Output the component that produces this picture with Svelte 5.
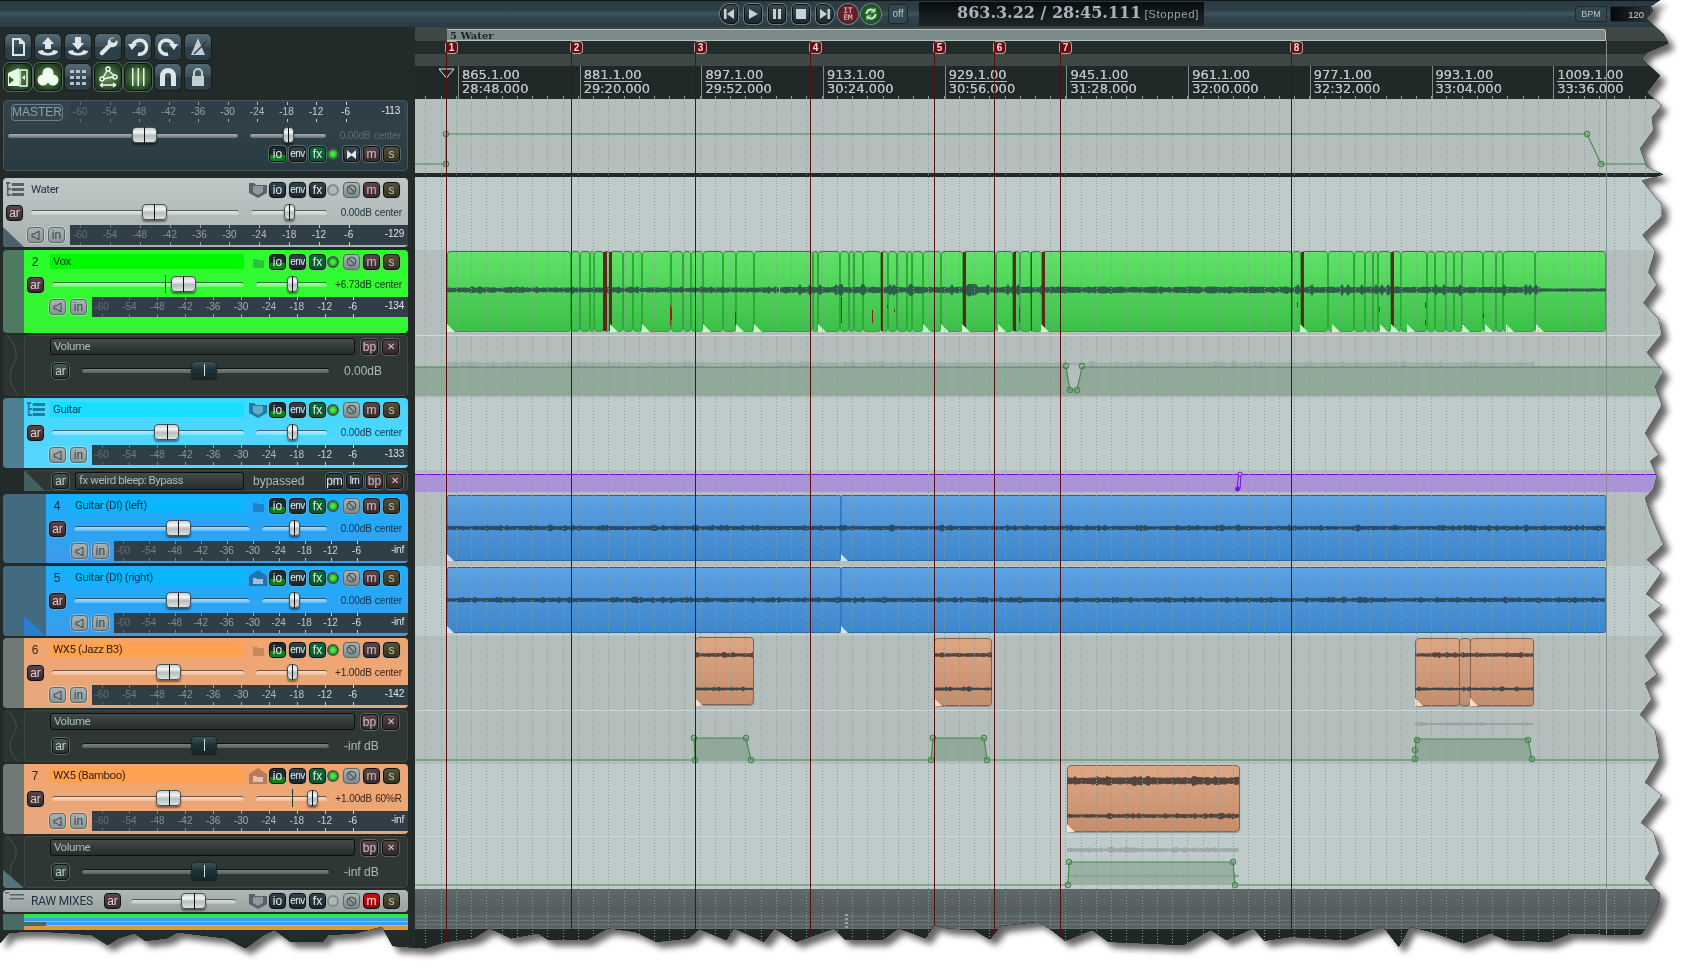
<script>
  const ticks = [-60, -54, -48, -42, -36, -30, -24, -18, -12, -6];

  // ruler: 16 bars per label, 32 seconds each
  const bars = [
    ["865.1.00", "28:48.000"], ["881.1.00", "29:20.000"], ["897.1.00", "29:52.000"],
    ["913.1.00", "30:24.000"], ["929.1.00", "30:56.000"], ["945.1.00", "31:28.000"],
    ["961.1.00", "32:00.000"], ["977.1.00", "32:32.000"], ["993.1.00", "33:04.000"],
    ["1009.1.00", "33:36.000"],
  ];
  const markers = [446, 571, 695, 810, 934, 994, 1060, 1291];

  const gridX = [];
  for (let k = -60; k < 25; k++) gridX.push(Math.round(1309.3 + k * 15.24));

  const lanes = [
    { h: 74, c: "dark" }, { h: 4, c: "bar" }, { h: 73, c: "light" },
    { h: 85, c: "dark" }, { h: 63, c: "dark top" }, { h: 72, c: "light" },
    { h: 24, c: "dark" }, { h: 72, c: "dark" }, { h: 70, c: "light" },
    { h: 74, c: "dark" }, { h: 54, c: "dark top" }, { h: 72, c: "light" },
    { h: 53, c: "light top" }, { h: 24, c: "raw" }, { h: 16, c: "thin" },
  ];

  // waveforms are noise, seeded so that they don't change between runs
  function wave(x0, x1, y, base, peak, seed) {
    let s = seed;
    const rnd = () => {
      s = (s * 16807) % 2147483647;
      return s / 2147483647;
    };
    const up = [];
    const down = [];
    for (let x = x0; x <= x1; x += 2) {
      const bump = rnd() > 0.86 ? peak : base * (0.8 + 0.35 * rnd());
      up.push(x + "," + (y - bump).toFixed(1));
      down.unshift(x + "," + (y + bump * (0.8 + 0.3 * rnd())).toFixed(1));
    }
    return up.concat(down).join(" ");
  }

  const voxCuts = [447, 571, 580, 590, 594, 604, 610, 623, 633, 642, 671, 683, 691, 703, 723, 736, 754,
    813, 818, 840, 849, 854, 863, 881, 888, 897, 907, 912, 923, 941, 963, 996, 1013, 1020, 1031, 1042,
    1292, 1301, 1328, 1354, 1365, 1373, 1378, 1391, 1401, 1427, 1435, 1446, 1454, 1462, 1483, 1496, 1503, 1535, 1606];
  const voxDark = [[603, 4], [609, 3], [881, 2], [963, 3], [1013, 3], [1031, 1], [1042, 3], [1301, 3], [1391, 3]];
  const voxFlecks = [[670, 305, 20], [671, 308, 12], [735, 312, 13], [841, 297, 26], [872, 310, 13], [887, 305, 3], [894, 309, 3], [1019, 308, 14], [1297, 302, 5], [1379, 307, 5], [1425, 302, 6], [1425, 320, 5], [1483, 313, 5]];
  const voxCorners = [447, 610, 642, 703, 736, 754, 818, 923, 941, 962, 998, 1041, 1300, 1332, 1380, 1391, 1407, 1462, 1485, 1506, 1536];

  const items = [];
  for (let i = 0; i < voxCuts.length - 1; i++) {
    items.push({ c: "vox", x: voxCuts[i], y: 251, w: voxCuts[i + 1] - voxCuts[i], h: 81 });
  }
  items.push({ c: "blue", x: 447, y: 495, w: 394, h: 66 }, { c: "blue", x: 841, y: 495, w: 765, h: 66 });
  items.push({ c: "blue", x: 447, y: 567, w: 394, h: 66 }, { c: "blue", x: 841, y: 567, w: 765, h: 66 });
  for (const [x, w] of [[695, 59], [934, 58], [1415, 45], [1459, 12], [1470, 64]]) {
    items.push({ c: "wood", x, y: 638, w, h: 68 });
  }
  items.push({ c: "wood", x: 1067, y: 765, w: 173, h: 67 });

  const corners = [
    ...voxCorners.map((x) => ({ x, y: 332, s: 8, f: "#c8ffc8" })),
    ...[447, 841].flatMap((x) => [{ x, y: 561, s: 7, f: "#cfe6fa" }, { x, y: 633, s: 7, f: "#cfe6fa" }]),
    ...[695, 934, 1415, 1470].map((x) => ({ x, y: 706, s: 8, f: "#fddcc4" })),
    { x: 1067, y: 832, s: 8, f: "#fddcc4" },
  ];

  const waves = [
    { p: wave(447, 780, 290, 2.4, 3.6, 11) + "", f: "#2f5d4b" },
    { p: wave(780, 1045, 290, 3, 6, 23), f: "#2f5d4b" },
    { p: wave(1045, 1292, 290, 3, 3.6, 31), f: "#2f5d4b" },
    { p: wave(1292, 1540, 290, 3, 6, 47), f: "#2f5d4b" },
    { p: wave(1540, 1606, 290, 1.6, 1.6, 5), f: "#2f5d4b" },
    { p: wave(447, 1606, 528, 2, 3.2, 53), f: "#2b4c68" },
    { p: wave(447, 1606, 600, 2, 3.2, 59), f: "#2b4c68" },
    { p: wave(695, 754, 655, 1.8, 3, 61), f: "#54463e" },
    { p: wave(695, 754, 689, 1.4, 2.4, 67), f: "#40474a" },
    { p: wave(934, 992, 655, 1.8, 3, 71), f: "#54463e" },
    { p: wave(934, 992, 689, 1.4, 2.4, 73), f: "#40474a" },
    { p: wave(1415, 1534, 655, 1.8, 3, 79), f: "#54463e" },
    { p: wave(1415, 1534, 689, 1.3, 2.4, 83), f: "#40474a" },
    { p: wave(1067, 1240, 781, 3.6, 5, 89), f: "#54463e" },
    { p: wave(1067, 1240, 816, 1.8, 3, 97), f: "#54463e" },
    { p: wave(447, 1535, 364, 1.5, 3, 101), f: "#9eabaa" },
    { p: wave(1067, 1240, 850, 1.8, 3, 103), f: "#9ea9a8" },
    { p: wave(1067, 1240, 876, 1, 2, 107), f: "#8ea595" },
    { p: wave(1415, 1534, 724, 1.2, 2, 109), f: "#98a5a4" },
  ];

  const envBands = [
    "415,367 1066,367 1070,390 1077,390 1082,367 1660,367 1660,396 415,396",
    "694,738 746,738 751,761 695,761",
    "933,738 984,738 987,761 931,761",
    "1416,739 1528,739 1532,761 1415,761",
    "1069,862 1233,862 1235,885 1068,885",
  ];
  const envLines = [
    "415,164 446,164 446,134 1587,134 1601,164 1660,164",
    "415,367 1066,367 1070,390 1077,390 1082,367 1660,367",
    "415,760 695,760 694,738 746,738 751,760 931,760 933,738 984,738 987,760 1415,760 1416,739 1528,739 1532,760 1660,760",
    "415,885 1068,885 1069,862 1233,862 1235,885 1660,885",
  ];
  const envPoints = [
    [446, 134], [446, 164], [1587, 134], [1601, 164], [1066, 366], [1082, 366], [1070, 390], [1077, 390],
    [694, 738], [746, 738], [751, 760], [695, 760], [933, 738], [984, 738], [987, 760], [931, 760],
    [1417, 740], [1528, 740], [1532, 759], [1415, 759], [1415, 750], [1069, 862], [1233, 862], [1235, 885], [1068, 885],
  ];

  // the torn paper edge, read off the picture
  const tearRight = [[150, 0], [122, 10], [130, 18], [108, 30], [160, 55], [175, 70], [110, 85], [95, 95], [115, 105], [150, 122], [110, 150], [155, 170], [125, 190], [130, 210], [90, 240], [110, 270], [160, 282], [95, 292], [130, 315], [155, 330], [155, 350], [97, 380], [135, 405], [115, 440], [140, 460], [100, 490], [145, 515], [155, 540], [110, 570], [160, 600], [135, 625], [155, 655], [105, 700], [145, 735], [120, 745], [140, 770], [130, 790], [105, 805], [120, 830], [160, 880], [110, 905], [155, 925], [108, 960], [155, 978], [115, 995], [160, 1025], [105, 1060], [140, 1090], [105, 1105], [125, 1130], [90, 1155], [135, 1180], [148, 1225], [105, 1265], [155, 1285], [92, 1330], [130, 1345], [148, 1380], [105, 1420], [150, 1445], [140, 1470], [105, 1500], [95, 1510]];
  const tearBottom = [[0, 130], [8, 100], [20, 95], [40, 95], [60, 98], [85, 105], [100, 135], [110, 115], [125, 100], [135, 122], [155, 115], [165, 97], [185, 105], [210, 115], [228, 145], [245, 105], [255, 90], [270, 125], [300, 125], [305, 105], [330, 100], [355, 80], [365, 138], [395, 145], [415, 125], [440, 115], [455, 85], [475, 115], [500, 100], [510, 120], [545, 120], [565, 85], [590, 95], [610, 125], [640, 115], [650, 87], [675, 120], [682, 85], [710, 125], [720, 85], [740, 125], [775, 85], [785, 118], [820, 120], [835, 85], [860, 115], [868, 75], [880, 85], [905, 90], [920, 118], [930, 78], [965, 65], [975, 85], [990, 122], [1015, 90], [1030, 125], [1100, 135], [1125, 90], [1140, 120], [1165, 85], [1175, 122], [1200, 110], [1250, 120], [1285, 78], [1300, 140], [1310, 80], [1330, 95], [1360, 130], [1385, 100], [1400, 120], [1440, 125], [1460, 100], [1515, 105]];
  const tearPoints = [
    "0 0",
    ...tearRight.map(([a, b]) => (1610 + a / 3).toFixed(1) + "px " + (b * 0.6186).toFixed(1) + "px"),
    ...tearBottom.slice().reverse().map(([a, b]) => (a * 1.076).toFixed(1) + "px " + (900 + b / 3).toFixed(1) + "px"),
  ];
  const tear = "polygon(" + tearPoints.join(",") + ")";
</script>

{#snippet meter(value)}
  <div class="meter">
    <div class="scale">
      {#each ticks as t, i}
        <span style="opacity:{0.28 + i * 0.075}">{t}</span>
      {/each}
    </div>
    <b>{value}</b>
  </div>
{/snippet}

{#snippet fader(pos, mark)}
  <div class="fader">
    {#if mark}<i class="mark" style="left:{mark}%"></i>{/if}
    <i class="cap" style="left:{pos}%"></i>
  </div>
{/snippet}

{#snippet pan(pos = 50, mark)}
  <div class="pan">
    {#if mark}<i class="mark" style="left:{mark}%"></i>{/if}
    <i class="cap" style="left:{pos}%"></i>
  </div>
{/snippet}

{#snippet btnrow(icon, active, m = false)}
  <div class="strip">
    <span class="ico">
      {#if icon === "shield"}
        <svg width="18" height="16" viewBox="0 0 18 16"><path d="M0 1h5l2 2h11v8l-9 5-9-5z" fill="currentColor"/><path d="M4 4h10v6l-5 3-5-3z" fill="#fff" opacity=".35"/></svg>
      {:else if icon === "small"}
        <svg width="18" height="16" viewBox="0 0 18 16" opacity=".72"><path d="M4 5h4l1 1h6v8H4z" fill="currentColor"/></svg>
      {:else if icon === "home"}
        <svg width="18" height="16" viewBox="0 0 18 16"><path d="M9 0l9 6v10H0V6z" fill="currentColor"/><path d="M4 8h3l1 1h6v5H4z" fill="#fff" opacity=".55"/></svg>
      {/if}
    </span>
    <span class="btn io" class:on={active}>io</span>
    <span class="btn env">env</span>
    <span class="btn fx" class:on={active}>fx</span>
    <i class="led" class:on={active}></i>
    <span class="btn route">
      <svg width="11" height="11" viewBox="0 0 11 11" fill="none" stroke="#4c5658" stroke-width="1.3"><circle cx="5.5" cy="5.5" r="4.2"/><path d="M2.5 2.5l6 6"/></svg>
    </span>
    <span class="btn m" class:hot={m}>m</span>
    <span class="btn s">s</span>
  </div>
{/snippet}

{#snippet track(t)}
  <div class="track {t.c}" style="height:{t.h}px">
    <div class="indent" style="width:{t.ind}px">
      {#if t.corner}<svg class="corner" width={t.ind} height="20" viewBox="0 0 {t.ind} 20"><path d="M21 0L{t.ind} 20H21z" fill={t.corner}/></svg>{/if}
    </div>
    <div class="panel">
      <div class="row1">
        {#if t.tree}
          <svg class="tree" width="18" height="15" viewBox="0 0 22 15" preserveAspectRatio="none"><path d="M0 0h5v2H3v4h3v2H3v4h3v2H1V2H0z M7 1h15v3H7z M7 6h15v3H7z M7 11h15v3H7z" fill="currentColor"/></svg>
        {:else}
          <span class="num">{t.n}</span>
        {/if}
        <span class="name">{t.name}</span>
        {@render btnrow(t.icon, t.active)}
      </div>
      <div class="row2">
        <span class="btn ar">ar</span>
        {@render fader(t.vol, t.mark)}
        {@render pan(t.pan ?? 50, t.pan ? 50 : 0)}
        <span class="vol">{t.db}<em>{t.lr ?? "center"}</em></span>
      </div>
      <div class="row3">
        <span class="btn grey"><svg width="11" height="11" viewBox="0 0 11 11" fill="none" stroke="#39474a"><path d="M9 1v9L4 7H2V4h2z"/></svg></span>
        <span class="btn grey">in</span>
        {@render meter(t.peak)}
      </div>
    </div>
  </div>
{/snippet}

{#snippet envelope(name, value, h, corner)}
  <div class="track envl" style="height:{h}px">
    <div class="indent">
      <svg width="21" height={h} viewBox="0 0 21 60" preserveAspectRatio="none" fill="none" stroke="#3d4744" stroke-width="1.5"><path d="M4 0c10 12 12 20 6 30-5 8-4 20 6 30"/></svg>
      {#if corner}<svg class="corner" width="21" height="18" viewBox="0 0 21 18"><path d="M0 0L21 18H0z" fill="#56747c"/></svg>{/if}
    </div>
    <div class="panel">
      <div class="erow">
        <span class="ename">{name}</span>
        <span class="btn m">bp</span>
        <span class="btn x">✕</span>
      </div>
      <div class="erow second">
        <span class="btn ar dk">ar</span>
        <div class="eslide"><i class="cap"></i></div>
        <span class="eval">{value}</span>
      </div>
    </div>
  </div>
{/snippet}

<div class="shot">
  <div class="tear">
    <div class="window" style="clip-path:{tear}">
      <header class="topbar">
        <div class="transport">
          <span class="tbtn left"><svg width="12" height="12" viewBox="0 0 12 12" fill="#c6d2d6"><path d="M1 1h2.5v10H1zM11 1v10L4 6z"/></svg></span>
          <span class="tbtn"><svg width="12" height="12" viewBox="0 0 12 12" fill="#c6d2d6"><path d="M2 1l9 5-9 5z"/></svg></span>
          <span class="tbtn"><svg width="12" height="12" viewBox="0 0 12 12" fill="#c6d2d6"><path d="M2 1h3v10H2zM7 1h3v10H7z"/></svg></span>
          <span class="tbtn"><svg width="12" height="12" viewBox="0 0 12 12" fill="#c6d2d6"><path d="M1 1h10v10H1z"/></svg></span>
          <span class="tbtn right"><svg width="12" height="12" viewBox="0 0 12 12" fill="#c6d2d6"><path d="M1 1l7 5-7 5zM8.5 1H11v10H8.5z"/></svg></span>
          <span class="round red">IT<br />EM</span>
          <span class="round green"><svg width="14" height="14" viewBox="0 0 14 14" fill="none" stroke="#cfe8d2" stroke-width="2"><path d="M2.5 7a4.5 4.5 0 0 1 8-2.8M11.5 7a4.5 4.5 0 0 1-8 2.8"/><path d="M11 1v4H7M3 13V9h4" stroke-width="1"/></svg></span>
          <span class="offbtn">off</span>
        </div>
        <div class="clock"><strong>863.3.22 / 28:45.111</strong> <span>[Stopped]</span></div>
        <div class="tempo"><span class="bpm">BPM</span><span class="bpmval">120</span></div>
      </header>

      <div class="body">
        <aside class="tcp">
          <div class="toolbar">
            <span class="tool"><svg viewBox="0 0 26 26" fill="none" stroke="#dde6e9" stroke-width="2"><path d="M8 5h7l4 4v12H8zM15 5v4h4"/></svg></span>
            <span class="tool"><svg viewBox="0 0 26 26" fill="#dde6e9"><path d="M13 3l6 7h-3v5h-6v-5H7zM3 17l5-1c0 4 10 4 10 0l5 1c0 6-20 6-20 0z"/></svg></span>
            <span class="tool"><svg viewBox="0 0 26 26" fill="#dde6e9"><path d="M10 3h6v6h3l-6 7-6-7h3zM3 17l5-1c0 4 10 4 10 0l5 1c0 6-20 6-20 0z"/></svg></span>
            <span class="tool"><svg viewBox="0 0 26 26" fill="#dde6e9"><path d="M20 4a5 5 0 0 0-7 6l-8 8a2.2 2.2 0 0 0 3 3l8-8a5 5 0 0 0 6-7l-3 3-3-1-1-3z"/></svg></span>
            <span class="tool"><svg viewBox="0 0 26 26" fill="none" stroke="#dde6e9" stroke-width="3.4"><path d="M8 11a7 7 0 1 1 5 9"/><path d="M3 10h9l-5 6z" fill="#dde6e9" stroke="none"/></svg></span>
            <span class="tool"><svg viewBox="0 0 26 26" fill="none" stroke="#dde6e9" stroke-width="3.4"><path d="M18 11a7 7 0 1 0-5 9"/><path d="M23 10h-9l5 6z" fill="#dde6e9" stroke="none"/></svg></span>
            <span class="tool"><svg viewBox="0 0 26 26" fill="#c3ced2"><path d="M13 4l7 17H6z"/><path d="M9 20L22 7" stroke="#2c3b42" stroke-width="1.5"/></svg></span>

            <span class="tool lit"><svg viewBox="0 0 26 26"><path d="M3 9l11-5v18H3z" fill="#e6ffe0"/><path d="M4 12l5 4-5 4z" fill="#2f5a2e"/><path d="M15 6h7v16h-7z" fill="none" stroke="#e6ffe0" stroke-width="1.5"/><path d="M20 11v5l-3-2.5z" fill="#e6ffe0"/></svg></span>
            <span class="tool lit"><svg viewBox="0 0 26 26" fill="#f0fff0"><circle cx="13" cy="9" r="5.5"/><circle cx="8" cy="16" r="5.5"/><circle cx="18" cy="16" r="5.5"/></svg></span>
            <span class="tool"><svg viewBox="0 0 26 26" fill="#b4c2c8"><path d="M5 6h4v3H5zM11 6h4v3h-4zM17 6h4v3h-4zM5 12h4v3H5zM11 12h4v3h-4zM17 12h4v3h-4zM5 18h4v3H5zM11 18h4v3h-4zM17 18h4v3h-4z"/></svg></span>
            <span class="tool lit"><svg viewBox="0 0 26 26" fill="none" stroke="#f0fff0" stroke-width="1.4"><circle cx="13" cy="5" r="2"/><circle cx="7" cy="15" r="2"/><circle cx="20" cy="13" r="2"/><path d="M12 7l-4 6.500M14 7l5 4.500M9 15l3-1 6-1"/><path d="M5 21h16M5 21l3-2M5 21l3 2M21 21l-3-2M21 21l-3 2"/></svg></span>
            <span class="tool lit"><svg viewBox="0 0 26 26" fill="#e6ffe0"><path d="M7 4h1.500v18H7zM12.500 4H14v18h-1.500zM18 4h1.500v18H18z"/></svg></span>
            <span class="tool"><svg viewBox="0 0 26 26" fill="#dde6e9"><path d="M5 22V12a8 8 0 0 1 16 0v10h-5V12a3 3 0 0 0-6 0v10z"/></svg></span>
            <span class="tool"><svg viewBox="0 0 26 26"><rect x="7" y="12" width="12" height="10" fill="#c3ced2"/><path d="M9 12V9a4 4 0 0 1 8 0v3" fill="none" stroke="#c3ced2" stroke-width="2"/></svg></span>
          </div>

          <div class="track masterbox">
            <div class="panel">
              <div class="mrow">
                <span class="masterbtn">MASTER</span>
                {@render meter("-113")}
              </div>
              <div class="mrow two">
                {@render fader(59)}
                {@render pan()}
                <span class="vol">0.00dB<em>center</em></span>
              </div>
              <div class="mrow three">
                <span class="btn io on">io</span>
                <span class="btn env">env</span>
                <span class="btn fx on">fx</span>
                <i class="led on"></i>
                <span class="btn bow"><svg width="11" height="11" viewBox="0 0 11 11" fill="#dfe7ea"><path d="M1 1l4.500 4 4.500-4v9L5.500 6.500 1 10z"/></svg></span>
                <span class="btn m">m</span>
                <span class="btn s">s</span>
              </div>
            </div>
          </div>

          {@render track({ c: "water", h: 69, ind: 0, tree: true, name: "Water", icon: "shield", vol: 59, db: "0.00dB", peak: "-129" })}
          {@render track({ c: "vox", h: 83, ind: 21, n: 2, name: "Vox", icon: "small", active: true, vol: 68, mark: 59, db: "+6.73dB", peak: "-134" })}
          {@render envelope("Volume", "0.00dB", 61)}
          {@render track({ c: "guitar", h: 70, ind: 21, tree: true, name: "Guitar", icon: "shield", active: true, vol: 59.6, db: "0.00dB", peak: "-133" })}

          <div class="track envl fxrow">
            <div class="indent"><svg width="43" height="21" viewBox="0 0 43 21"><path d="M21 0l21 21H21z" fill="#43605f"/></svg></div>
            <div class="panel">
              <div class="erow">
                <span class="btn ar dk">ar</span>
                <span class="ename short">fx weird bleep: Bypass</span>
                <span class="bypassed">bypassed</span>
                <span class="btn">pm</span>
                <span class="btn lrn">lrn</span>
                <span class="btn m">bp</span>
                <span class="btn x">✕</span>
              </div>
            </div>
          </div>

          {@render track({ c: "blue", h: 69, ind: 43, n: 4, name: "Guitar (DI) (left)", icon: "small", active: true, vol: 59, db: "0.00dB", peak: "-inf" })}
          {@render track({ c: "blue", h: 70, ind: 43, n: 5, name: "Guitar (DI) (right)", icon: "home", active: true, vol: 59, db: "0.00dB", peak: "-inf", corner: "#2a7ed2" })}
          {@render track({ c: "wood", h: 70, ind: 21, n: 6, name: "WX5 (Jazz B3)", icon: "small", active: true, vol: 60.5, db: "+1.00dB", peak: "-142" })}
          {@render envelope("Volume", "-inf dB", 52)}
          {@render track({ c: "wood", h: 70, ind: 21, n: 7, name: "WX5 (Bamboo)", icon: "home", active: true, vol: 60.5, pan: 79, db: "+1.00dB", lr: "60%R", peak: "-inf" })}
          {@render envelope("Volume", "-inf dB", 52, true)}

          <div class="track rawbox">
            <div class="panel">
              <svg class="tree" width="19" height="10" viewBox="0 0 19 10"><path d="M0 0h4v1.500H0zM5 2h14v1.500H5zM5 6h14v1.500H5z" fill="currentColor"/></svg>
              <span class="rawname">RAW MIXES</span>
              <span class="btn ar">ar</span>
              {@render fader(59.5)}
              {@render btnrow("shield", false, true)}
            </div>
          </div>

          <div class="minis">
            <div class="mini"><i></i><b class="g"></b></div>
            <div class="mini"><i></i><b class="b"></b></div>
            <div class="mini"><i class="wide"></i><b class="b"></b></div>
            <div class="mini"><i></i><b class="o"></b></div>
          </div>
        </aside>

        <main class="arrange">
          <div class="regionrow"><div class="region">5 Water</div></div>
          <div class="markerrow">
            {#each markers as x, i}
              <span class="marker" style="left:{x - 415}px">{i + 1}</span>
            {/each}
          </div>
          <div class="strip2"></div>
          <div class="ruler">
            {#each bars as [a, b]}
              <div class="barlabel"><span class="up">{a}</span><span>{b}</span></div>
            {/each}
            <svg class="cursor" width="18" height="11" viewBox="0 0 18 11"><path d="M1 1h15L8.500 10z" fill="#202927" stroke="#e7eceb"/></svg>
          </div>

          <div class="lanes">
            {#each lanes as l}
              <div class="lane {l.c}" style="height:{l.h}px"></div>
            {/each}
            <div class="lane tail"></div>
          </div>

          <div class="canvas">
            {#each items as it}
              <div class="item {it.c}" style="left:{it.x - 415}px;top:{it.y - 27}px;width:{it.w}px;height:{it.h}px"></div>
            {/each}
          </div>

          <svg class="overlay" width="1272" height="943" viewBox="415 27 1272 943">
            <rect x="415" y="474" width="1250" height="18" fill="#ab93d8" />
            <path d="M415 474.500H1665" stroke="#7a10e0" />
            {#each envBands as p}
              <polygon points={p} fill="#5f8a63" opacity=".4" />
            {/each}
            {#each waves as w}
              <polygon points={w.p} fill={w.f} />
            {/each}
            {#each voxDark as [x, w]}
              <rect {x} y="252" width={w} height="79" fill="#5a2a1c" />
            {/each}
            {#each voxFlecks as [x, y, h]}
              <rect {x} {y} width="1" height={h} fill="#a01818" />
            {/each}
            {#each corners as c}
              <polygon points="{c.x},{c.y} {c.x + c.s},{c.y} {c.x},{c.y - c.s}" fill={c.f} />
            {/each}
            {#each gridX as x}
              <path d="M{x + 0.5} 99V945" stroke="#8a9a9a" stroke-dasharray="1 2" />
              <path d="M{x + 0.5} 96V99" stroke="#90a09e" />
            {/each}
            <path d="M1606.500 41V945" stroke="#7f908f" />
            {#each envLines as p}
              <polyline points={p} fill="none" stroke="#48884f" stroke-width="1.2" />
            {/each}
            {#each envPoints as [x, y]}
              <circle cx={x} cy={y} r="2.600" fill="none" stroke="#48884f" stroke-width="1.200" />
            {/each}
            <path d="M1237 489L1238.500 475M1241 475L1240 489" stroke="#7a10e0" fill="none" />
            <circle cx="1240" cy="474" r="2" fill="#c0a0e8" stroke="#7a10e0" />
            <circle cx="1237.500" cy="489" r="2.400" fill="#7a10e0" />
            {#each markers as x}
              <path d="M{x + 0.5} 42V945" stroke="#5a0d0d" />
            {/each}
            <path d="M845 915h3M845 919h3M845 923h3M845 927h3" stroke="#d8dede" />
          </svg>
        </main>
      </div>
    </div>
  </div>
</div>

<style>
  :global(body) {
    background: #fff;
    overflow: hidden;
  }
  .shot {
    width: 1687px;
    height: 970px;
    overflow: hidden;
    background: #fff;
  }
  .tear {
    filter: drop-shadow(0 0 0.6px #000) drop-shadow(6px 6px 3px rgba(0, 0, 0, 0.6));
  }
  .window {
    height: 970px;
    display: flex;
    flex-direction: column;
    background: #202927;
    font-family: "Liberation Sans", Arial, sans-serif;
    font-size: 11px;
  }

  /* top bar */
  .topbar {
    height: 27px;
    flex: none;
    display: flex;
    align-items: center;
    border-top: 1px solid #10181a;
    box-sizing: border-box;
    background: linear-gradient(#2b3a41 0, #2f4048 35%, #41565f 50%, #324650 60%, #2a3a41 100%);
  }
  .transport {
    margin-left: 720px;
    display: flex;
    align-items: center;
    gap: 6px;
  }
  .tbtn {
    width: 18px;
    height: 20px;
    box-sizing: border-box;
    display: flex;
    align-items: center;
    justify-content: center;
    border: 1px solid #0b1012;
    border-radius: 5px;
    box-shadow: 0 0 0 1px #6c7e85;
    background: linear-gradient(#394a52, #1c272c);
  }
  .tbtn.left {
    border-radius: 10px 5px 5px 10px;
  }
  .tbtn.right {
    border-radius: 5px 10px 10px 5px;
  }
  .round {
    width: 20px;
    height: 20px;
    margin-right: -3px;
    border-radius: 50%;
    display: flex;
    align-items: center;
    justify-content: center;
    text-align: center;
    box-shadow: 0 0 0 1px #72848a;
  }
  .round.red {
    margin-left: -2px;
    background: radial-gradient(#7e2a33, #4b1219);
    color: #e9cfd2;
    font: 7.5px/7.5px "DejaVu Sans Mono", monospace;
  }
  .round.green {
    background: radial-gradient(#2f7a36, #123f18);
  }
  .offbtn {
    margin-left: 4px;
    width: 20px;
    height: 20px;
    border-radius: 3px;
    border: 1px solid #1b272c;
    background: #34474f;
    color: #b8c6cb;
    text-align: center;
    line-height: 18px;
    font-size: 10px;
    box-sizing: border-box;
  }
  .clock {
    margin-left: 11px;
    width: 285px;
    height: 24px;
    box-sizing: border-box;
    padding-left: 38px;
    white-space: nowrap;
    background: linear-gradient(#0a0d0e, #1f2525);
    line-height: 22px;
    color: #a7b5ba;
  }
  .clock strong {
    font: bold 16px/22px "DejaVu Serif", serif;
  }
  .clock span {
    font-size: 11.5px;
    color: #97a5aa;
    letter-spacing: 0.6px;
  }
  .tempo {
    margin-left: 371px;
    display: flex;
    gap: 3px;
  }
  .bpm {
    width: 32px;
    height: 16px;
    text-align: center;
    line-height: 15px;
    font-size: 9px;
    color: #b4c2c6;
    border: 1px solid #1d2a30;
    border-radius: 4px 0 0 4px;
    background: #34464e;
    box-sizing: border-box;
  }
  .bpmval {
    width: 40px;
    height: 16px;
    box-sizing: border-box;
    padding-right: 5px;
    text-align: right;
    line-height: 15px;
    font-size: 9.5px;
    color: #cad4d6;
    border: 1px solid #1d2a30;
    background: linear-gradient(90deg, #050708, #2c3436);
  }

  .body {
    flex: 1;
    display: flex;
    min-height: 0;
  }

  /* track control panel */
  .tcp {
    width: 415px;
    flex: none;
    box-sizing: border-box;
    padding: 7px 7px 0 3px;
    display: flex;
    flex-direction: column;
    background: #222b29;
  }
  .toolbar {
    height: 66px;
    margin-left: 2px;
    display: grid;
    grid-template-columns: repeat(7, 26px);
    grid-auto-rows: 26px;
    gap: 4px;
  }
  .tool {
    border-radius: 5px;
    background: linear-gradient(#536a75 0, #3c505a 48%, #2c3e47 52%, #2d3f48 100%);
    box-shadow: 0 0 0 1px #151d1f;
    display: block;
  }
  .tool svg {
    display: block;
    width: 26px;
    height: 26px;
  }
  .tool.lit {
    background: radial-gradient(#6a9a60, #1e3a1e 80%);
    box-shadow: 0 0 0 1px #0c1210, 0 0 0 2px #54685a;
  }

  .track {
    display: flex;
    margin-bottom: 2px;
    flex: none;
    overflow: hidden;
    border-radius: 4px;
  }
  .indent {
    width: 21px;
    flex: none;
    position: relative;
    background: var(--ind, transparent);
  }
  .corner {
    position: absolute;
    left: 0;
    bottom: 0;
  }
  .panel {
    flex: 1;
    min-width: 0;
    background: var(--bg);
    color: var(--ink, #1a2a33);
    box-sizing: border-box;
  }

  .masterbox {
    height: 71px;
    margin-bottom: 7px;
    --bg: linear-gradient(#33444c, #2a3a41);
  }
  .masterbox .panel {
    border: 1px solid #445760;
    border-radius: 4px;
    padding: 1px 7px 0 4px;
  }
  .mrow {
    display: flex;
    align-items: center;
    gap: 12px;
  }
  .mrow.two {
    height: 16px;
    margin-top: 5px;
    color: #5d6d72;
  }
  .mrow.two .fader {
    flex: none;
    width: 230px;
  }
  .mrow.two .vol {
    color: #5d6d72;
  }
  .mrow.three {
    margin-top: 3px;
    justify-content: flex-end;
    gap: 3px;
  }
  .masterbtn {
    width: 50px;
    margin: 0 1px 0 3px;
    height: 15px;
    text-align: center;
    line-height: 15px;
    font-size: 12px;
    color: #8ea0a6;
    border: 1px solid #6d7e84;
    border-radius: 4px;
    background: #34454d;
    flex: none;
  }
  .masterbtn + .meter {
    margin-left: -6px;
  }

  .row1 {
    display: flex;
    align-items: center;
    height: 17px;
    margin-top: 3px;
  }
  .num {
    width: 26px;
    padding-right: 4px;
    box-sizing: border-box;
    text-align: center;
    flex: none;
    font-size: 12px;
  }
  .tree {
    flex: none;
    color: var(--icon);
    margin: 0 4px 0 3px;
  }
  .guitar .tree {
    margin-right: 5px;
  }
  .name {
    flex: 1;
    min-width: 0;
    height: 15px;
    padding-left: 3px;
    font: 11.5px/15px Roboto, sans-serif;
    letter-spacing: -0.45px;
    background: var(--name, transparent);
    white-space: nowrap;
  }
  .strip {
    display: flex;
    align-items: center;
    gap: 3px;
    margin-left: 5px;
    margin-right: 8px;
    flex: none;
  }
  .ico {
    width: 18px;
    height: 16px;
    margin-right: -1px;
    color: var(--icon);
  }
  .ico svg {
    display: block;
  }
  .row2 {
    display: flex;
    align-items: center;
    gap: 12px;
    height: 17px;
    margin-top: 6px;
    padding-left: 3px;
    padding-right: 7px;
  }
  .row2 .ar {
    margin-right: -4px;
  }
  .row3 {
    display: flex;
    align-items: center;
    gap: 4px;
    margin-top: 4px;
    padding-left: 25px;
    padding-right: 4px;
  }
  .row3 .meter {
    margin-left: 1px;
  }

  .btn {
    width: 17px;
    height: 16px;
    flex: none;
    box-sizing: border-box;
    display: inline-flex;
    align-items: center;
    justify-content: center;
    border: 1px solid #0d1214;
    border-radius: 4px;
    color: #e4ecee;
    font-size: 12px;
    line-height: 14px;
    background: linear-gradient(#33424a, #1c272c);
    box-shadow: 0 0 0 1px rgba(160, 175, 180, 0.4);
  }
  .btn.env,
  .btn.lrn {
    font-size: 10px;
    letter-spacing: -0.5px;
  }
  .btn.io.on {
    background: linear-gradient(#1e2a30 60%, #138018 60%);
  }
  .btn.fx.on {
    background: linear-gradient(#0b6a35, #085a28);
  }
  .btn.route {
    background: linear-gradient(#a9b3b3, #7e8a8a);
    border-color: #5b6667;
  }
  .btn.m {
    color: #c9bfc0;
    background: linear-gradient(#5d4649, #3b2a2d);
  }
  .btn.m.hot {
    color: #ffe6e6;
    background: linear-gradient(#c8100f, #8c0b0a);
  }
  .btn.s {
    color: #c8c6b4;
    background: linear-gradient(#54513a, #35331f);
  }
  .btn.ar {
    color: #dcd3d4;
    background: linear-gradient(#5f4347, #3b272b);
  }
  .btn.ar.dk {
    color: #c3d1ca;
    background: linear-gradient(#43584e, #26342d);
  }
  .btn.grey {
    color: #39474a;
    background: linear-gradient(#a9b3b3, #8b9697);
    border-color: #5d6869;
    box-shadow: 0 0 0 1px rgba(255, 255, 255, 0.3);
  }
  .btn.bow {
    background: linear-gradient(#3a4b53, #24323a);
  }
  .btn.x {
    color: #d8cfcf;
    font-size: 10px;
    background: linear-gradient(#53413f, #352829);
  }
  .led {
    width: 12px;
    height: 12px;
    flex: none;
    margin: 0 1px 0 -2px;
    border-radius: 50%;
    box-sizing: border-box;
    border: 2px solid #7f8b8a;
    background: #aeb8b7;
  }
  .led.on {
    border-color: #47534f;
    background: radial-gradient(#55ff45, #0d9a0d);
  }

  .fader,
  .pan {
    position: relative;
    height: 5px;
    border-radius: 3px;
    border-top: 1px solid rgba(0, 0, 0, 0.55);
    background: linear-gradient(rgba(255, 255, 255, 0.6), rgba(255, 255, 255, 0.25));
    box-sizing: border-box;
  }
  .fader {
    flex: 3 1 0;
  }
  .pan {
    flex: 1 1 7px;
  }
  .mark {
    position: absolute;
    top: -8px;
    width: 1px;
    height: 18px;
    background: #26332c;
  }
  .cap {
    position: absolute;
    top: -7px;
    width: 25px;
    height: 16px;
    margin-left: -12px;
    border-radius: 4px;
    border: 1px solid #485255;
    box-sizing: border-box;
    background: linear-gradient(#c9cfcf 0, #f4f6f6 30%, #b7bebe 55%, #dde1e1 100%);
    box-shadow: 0 2px 2px rgba(0, 0, 0, 0.45);
  }
  .cap::after {
    content: "";
    position: absolute;
    left: 11.5px;
    top: -1px;
    bottom: -1px;
    width: 1px;
    background: #111;
  }
  .pan .cap {
    width: 11px;
    margin-left: -5px;
  }
  .pan .cap::after {
    left: 4px;
  }
  .vol {
    width: 75px;
    flex: none;
    box-sizing: border-box;
    margin: 0 -1px 0 -12px;
    display: flex;
    justify-content: flex-end;
    gap: 3px;
    white-space: nowrap;
    font-size: 10px;
    letter-spacing: -0.1px;
    color: var(--ink, #1a2a33);
  }
  .vol em {
    font-style: normal;
  }

  .meter {
    flex: 1;
    min-width: 0;
    height: 20px;
    margin-right: -4px;
    position: relative;
    overflow: hidden;
    background: #303e47;
    color: #dde4e6;
    font-size: 10px;
  }
  .scale {
    position: absolute;
    left: -1.4%;
    width: 88.3%;
    top: 0;
    bottom: 0;
    display: grid;
    grid-template-columns: repeat(10, 1fr);
  }
  .scale span {
    text-align: center;
    line-height: 20px;
    position: relative;
  }
  .scale span::before,
  .scale span::after {
    content: "";
    position: absolute;
    left: 50%;
    width: 1px;
    height: 3px;
    background: #dde4e6;
  }
  .scale span::before {
    top: 0;
  }
  .scale span::after {
    bottom: 0;
  }
  .meter b {
    position: absolute;
    right: 4px;
    top: 0;
    line-height: 17px;
    font-weight: normal;
    letter-spacing: -0.2px;
  }

  /* track colours */
  .water {
    --bg: linear-gradient(#c0c9c8, #a6b0af);
    --ink: #1e3040;
    --icon: #57636a;
    margin-bottom: 3px;
    position: relative;
  }
  .water::after {
    content: "";
    position: absolute;
    left: 0;
    bottom: 0;
    border-left: 21px solid #4b6069;
    border-top: 20px solid transparent;
  }
  .water .row3 {
    padding-left: 24px;
  }
  .vox {
    --bg: linear-gradient(#2cff2c, #37f237);
    --ind: #4e7a62;
    --name: #00f900;
    --ink: #0e3318;
    --icon: #25b044;
  }
  .guitar {
    --bg: linear-gradient(#3ed8ff, #5ad6ff);
    --ind: #4d7f90;
    --name: #18deff;
    --ink: #103a52;
    --icon: #1a7ea6;
  }
  .blue {
    --bg: linear-gradient(#16b0ff, #3d9be9);
    --ind: #426a80;
    --name: #08b6fb;
    --ink: #103048;
    --icon: #2173b2;
    margin-bottom: 3px;
  }
  .blue + .wood {
    margin-top: -1px;
  }
  .wood {
    --bg: linear-gradient(#f2a56e, #e6a77e);
    --ind: #6f7a74;
    --name: #ffa24f;
    --ink: #3c2416;
    --icon: #b97b55;
  }
  .envl {
    --bg: #2f3735;
    --ind: #2c3432;
    --ink: #a9bbb9;
  }
  .envl .panel {
    border: 1px solid #3e4845;
    border-radius: 3px;
  }
  .erow {
    display: flex;
    align-items: center;
    gap: 4px;
    height: 17px;
    margin-top: 2px;
    padding: 0 8px 0 25px;
  }
  .erow.second {
    margin-top: 7px;
    padding-left: 27px;
    padding-right: 0;
    gap: 0;
  }
  .ename {
    flex: 1;
    height: 17px;
    box-sizing: border-box;
    padding-left: 3px;
    font: 11.5px/15px Roboto, sans-serif;
    letter-spacing: -0.45px;
    color: #a9bbb9;
    border: 1px solid #0b0f0e;
    border-radius: 3px;
    background: linear-gradient(#424c4a, #262d2b);
    margin-right: 2px;
  }
  .eslide {
    margin-left: 13px;
    width: 247px;
    height: 5px;
    position: relative;
    border-radius: 3px;
    border-top: 1px solid #0d1110;
    background: linear-gradient(#78827f, #59625f);
    box-sizing: border-box;
  }
  .eslide .cap {
    left: 49%;
    width: 26px;
    top: -8px;
    height: 17px;
    border-color: #1c2a2b;
    background: linear-gradient(#3e5357, #1d3337 50%, #152a2e);
  }
  .eslide .cap::after {
    background: #d7e0e0;
    left: 12px;
    top: 2px;
    bottom: 1px;
  }
  .eval {
    margin-left: 15px;
    font-size: 12px;
    color: #a9bbb9;
    white-space: nowrap;
  }
  .fxrow {
    height: 21px;
    margin-bottom: 3px;
  }
  .fxrow .erow {
    margin-top: 1px;
    padding-left: 27px;
    gap: 3px;
  }
  .fxrow .btn.ar {
    margin-right: 3px;
  }
  .fxrow .ename {
    flex: none;
    width: 169px;
    height: 18px;
  }
  .fxrow .bypassed {
    width: 70px;
    margin-left: 4px;
    font-size: 12px;
    color: #a9bbb9;
    flex: none;
  }
  .fxrow .indent {
    margin-right: -21px;
    width: 42px;
    z-index: 1;
    background: none;
  }

  .rawbox {
    height: 22px;
    --bg: linear-gradient(#aeb9b8, #97a2a1);
    --ink: #1e3040;
    --icon: #57636a;
  }
  .rawbox .panel {
    display: flex;
    align-items: center;
  }
  .rawbox .tree {
    margin: -8px 7px 0 2px;
  }
  .rawname {
    width: 73px;
    font: 12px Roboto, sans-serif;
    letter-spacing: -0.2px;
    flex: none;
  }
  .rawbox .fader {
    margin-left: 10px;
    flex: none;
    width: 105px;
  }
  .rawbox .strip {
    margin-left: auto;
  }
  .minis {
    height: 16px;
  }
  .mini {
    display: flex;
    height: 4px;
  }
  .mini i {
    width: 21px;
    background: #4a6a68;
  }
  .mini i.wide {
    width: 43px;
  }
  .mini b {
    flex: 1;
    border-bottom: 1px solid #7ec0f0;
  }
  .mini .g {
    background: #30e84a;
    border-color: #30e84a;
  }
  .mini .b {
    background: #3a9fe8;
  }
  .mini .o {
    background: #e09838;
    border-color: #e09838;
  }

  /* arrange view */
  .arrange {
    flex: 1;
    min-width: 0;
    position: relative;
    display: flex;
    flex-direction: column;
    overflow: hidden;
    border-left: 0;
  }
  .regionrow {
    height: 14px;
    background: #3f4845;
    flex: none;
    padding: 2px 0 0 32px;
    box-sizing: border-box;
  }
  .region {
    width: 1159px;
    height: 12px;
    box-sizing: border-box;
    border: solid #b6c2c1;
    border-width: 1px 1px 1px 0;
    border-top-right-radius: 3px;
    background: #7b8a88;
    padding-left: 3px;
    font: bold 10px/12px "DejaVu Serif", serif;
    color: #1b2422;
  }
  .markerrow {
    height: 13px;
    flex: none;
    position: relative;
    background: #222c2a;
  }
  .marker {
    position: absolute;
    top: 1px;
    width: 11px;
    height: 11px;
    box-sizing: border-box;
    border-radius: 3px;
    background: #650d12;
    box-shadow: 0 0 0 1px #b9a0a0;
    color: #e8dcdc;
    text-align: center;
    font: bold 10px/11px "Liberation Sans", sans-serif;
  }
  .strip2 {
    height: 12px;
    flex: none;
    background: #3f4845;
  }
  .ruler {
    height: 33px;
    flex: none;
    position: relative;
    display: flex;
    padding-left: 43px;
    background: #202927;
  }
  .barlabel {
    width: 121.700px;
    flex: none;
    box-sizing: border-box;
    padding: 3px 0 0 3px;
    border-left: 1px solid #7c8a88;
    display: flex;
    flex-direction: column;
    align-items: flex-start;
    color: #b9c5c7;
    font: 13px/12px "DejaVu Sans", sans-serif;
    white-space: nowrap;
    text-shadow: 0 0 0.6px #b9c5c7;
  }
  .barlabel .up {
    border-bottom: 1px solid #b4c0c2;
    margin-bottom: 1px;
  }
  .cursor {
    position: absolute;
    left: 23px;
    top: 2px;
  }
  .lanes {
    flex: 1;
    display: flex;
    flex-direction: column;
  }
  .lane {
    flex: none;
    box-sizing: border-box;
  }
  .lane.dark {
    background: #b3bebd;
  }
  .lane.light {
    background: #bfcbcb;
  }
  .lane.top {
    border-top: 1px solid #cfd9d9;
  }
  .lane.bar {
    background: #202927;
  }
  .lane.raw {
    background: linear-gradient(#5f6868, #555e5e);
  }
  .lane.thin {
    background: repeating-linear-gradient(#596262 0 3px, #6a7373 3px 4px);
  }
  .lane.tail {
    flex: 1;
    background: #1f2826;
  }
  .canvas {
    position: absolute;
    inset: 0;
  }
  .item {
    position: absolute;
    box-sizing: border-box;
    border-radius: 4px;
  }
  .item.vox {
    background: linear-gradient(#5fe468, #3cbf48);
    border: 1px solid #2fa83b;
    border-top-color: #596160;
  }
  .item.blue {
    background: linear-gradient(#5da2e2, #3e86cb);
    border: 1px solid #3a7cba;
    border-top-color: #555;
    border-bottom-color: #2c6aa2;
    border-radius: 2px;
  }
  .item.wood {
    background: linear-gradient(#dda685, #c48d6c);
    border: 1px solid #7f6455;
    box-shadow: 0 1px 1px rgba(0, 0, 0, 0.25);
  }
  .overlay {
    position: absolute;
    left: 0;
    top: 0;
    pointer-events: none;
  }
</style>
